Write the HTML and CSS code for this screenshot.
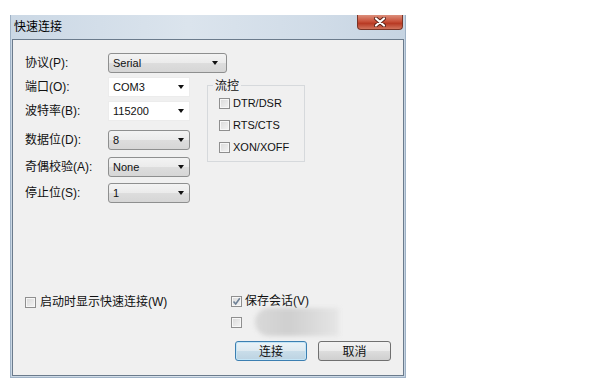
FILE: index.html
```html
<!DOCTYPE html>
<html lang="zh-CN">
<head>
    <meta charset="UTF-8">
    <title>快速连接</title>
    <link rel="stylesheet" href="styles.css">
</head>
<body>

<div class="window">
    <div class="titlebar">
        <span class="title">快速连接</span>
        <span class="close">
            <svg width="12" height="10" viewBox="0 0 12 10">
                <path d="M2 1.5 L10 8.5 M10 1.5 L2 8.5" stroke="#5a2218" stroke-width="4" stroke-linecap="round"/>
                <path d="M2 1.5 L10 8.5 M10 1.5 L2 8.5" stroke="#ffffff" stroke-width="2.2" stroke-linecap="round"/>
            </svg>
        </span>
    </div>

    <div class="client">
        <div class="form">
            <div class="row">
                <span class="lbl">协议(P):</span>
                <div class="combo list wide"><span>Serial</span><i class="arrow"></i></div>
            </div>

            <div class="lower">
                <div class="fields">
                    <div class="row">
                        <span class="lbl">端口(O):</span>
                        <div class="combo edit"><span>COM3</span><i class="arrow"></i></div>
                    </div>
                    <div class="row">
                        <span class="lbl">波特率(B):</span>
                        <div class="combo edit"><span>115200</span><i class="arrow"></i></div>
                    </div>
                    <div class="row gap-9">
                        <span class="lbl">数据位(D):</span>
                        <div class="combo list"><span>8</span><i class="arrow"></i></div>
                    </div>
                    <div class="row gap-7">
                        <span class="lbl">奇偶校验(A):</span>
                        <div class="combo list"><span>None</span><i class="arrow"></i></div>
                    </div>
                    <div class="row gap-6">
                        <span class="lbl">停止位(S):</span>
                        <div class="combo list"><span>1</span><i class="arrow"></i></div>
                    </div>
                </div>

                <fieldset class="flow">
                    <legend>流控</legend>
                    <label class="check"><span class="box"></span>DTR/DSR</label>
                    <label class="check"><span class="box"></span>RTS/CTS</label>
                    <label class="check"><span class="box"></span>XON/XOFF</label>
                </fieldset>
            </div>
        </div>

        <div class="bottom">
            <label class="check startup"><span class="box"></span>启动时显示快速连接(W)</label>
            <div class="side">
                <label class="check">
                    <span class="box">
                        <svg width="9" height="9" viewBox="0 0 9 9">
                            <path d="M1.5 4.5 L3.7 7 L7.8 1.2" stroke="#6f8196" stroke-width="1.6" fill="none"/>
                        </svg>
                    </span>保存会话(V)
                </label>
                <label class="check"><span class="box"></span><span class="smudge"></span></label>
                <div class="buttons">
                    <button class="btn default">连接</button>
                    <button class="btn">取消</button>
                </div>
            </div>
        </div>
    </div>
</div>

</body>
</html>
```

FILE: styles.css
```css
body, html {
    margin: 0;
    padding: 0;
    background: #ffffff;
    font-family: "Liberation Sans", "Noto Sans CJK SC", sans-serif;
    font-size: 12px;
    color: #111;
}

/* Окно */
.window {
    box-sizing: border-box;
    margin: 15px 0 0 10px;
    width: 396px;
    height: 363px;
    border: 1px solid #9fb2c6;
    border-top: none;
    background: linear-gradient(to right, #cbd8e5, #dbe4ed 45%, #cfdbe7 80%, #c6d4e2);
    padding: 0 1px 1px 1px;
    display: flex;
    flex-direction: column;
}

.titlebar {
    height: 24px;
    display: flex;
    justify-content: space-between;
    align-items: flex-start;
}

.title {
    font-family: "Noto Sans CJK SC", sans-serif;
    font-size: 12px;
    line-height: 14px;
    padding: 4px 0 0 2px;
    color: #000;
}

.close {
    box-sizing: border-box;
    width: 46px;
    height: 15px;
    margin-right: 1px;
    border: 1px solid #7a3426;
    border-top: none;
    border-radius: 0 0 4px 4px;
    background: linear-gradient(#dc8f7c, #c9523b 45%, #b83a24 60%, #d1735c);
    display: flex;
    justify-content: center;
    align-items: center;
}

/* Клиентская область */
.client {
    flex: 1;
    border: 1px solid #6b7b8c;
    background: #f0f0f0;
    padding: 13px 12px 14px 12px;
    display: flex;
    flex-direction: column;
    justify-content: space-between;
}

.row {
    display: flex;
    align-items: center;
    height: 20px;
}

.row + .row {
    margin-top: 4px;
}

.row.gap-9 { margin-top: 9px; }
.row.gap-7 { margin-top: 7px; }
.row.gap-6 { margin-top: 6px; }

.lbl {
    width: 83px;
    line-height: 14px;
}

.combo {
    box-sizing: border-box;
    width: 82px;
    height: 20px;
    display: flex;
    align-items: center;
    justify-content: space-between;
    padding: 0 5px 0 4px;
    font-size: 11px;
}

.combo.wide {
    width: 119px;
    padding-right: 8px;
}

.combo.list {
    border: 1px solid #8e8f8f;
    border-radius: 3px;
    background: linear-gradient(#f3f3f3, #ebebeb 50%, #dddddd 51%, #d6d6d6);
}

.combo.edit {
    border: 1px solid #ececec;
    background: #ffffff;
}

.arrow {
    width: 0;
    height: 0;
    border-left: 3.5px solid transparent;
    border-right: 3.5px solid transparent;
    border-top: 4px solid #111;
}

.lower {
    display: flex;
    align-items: flex-start;
    margin-top: 4px;
}

/* Группа "流控" */
.flow {
    margin: 2px 0 0 17px;
    width: 98px;
    box-sizing: border-box;
    border: 1px solid #d6d9dc;
    padding: 5px 4px 7px 11px;
    display: flex;
    flex-direction: column;
    gap: 8px;
}

.flow legend {
    font-family: "Noto Sans CJK SC", sans-serif;
    line-height: 12px;
    padding: 0 2px;
    margin-left: -6px;
}

.check {
    display: flex;
    align-items: center;
    height: 14px;
    line-height: 14px;
    white-space: nowrap;
}

.flow .check {
    font-size: 11px;
}

.box {
    box-sizing: border-box;
    width: 11px;
    height: 11px;
    margin-right: 3px;
    border: 1px solid #8f8f8f;
    background: linear-gradient(135deg, #d9d9d9, #f4f4f4);
    box-shadow: inset 0 0 0 1px #f7f7f7;
    display: flex;
    align-items: center;
    justify-content: center;
    flex-shrink: 0;
}

/* Нижняя часть */
.bottom {
    display: flex;
    align-items: flex-start;
}

.startup {
    width: 207px;
    height: 16px;
    margin-top: 1px;
}

.startup .box {
    margin-right: 4px;
}

.side {
    display: flex;
    flex-direction: column;
}

.side .check {
    height: 16px;
}

.side .check + .check {
    margin-top: 5px;
}

.smudge {
    width: 84px;
    height: 28px;
    margin-left: 10px;
    border-radius: 14px 0 0 14px;
    background: linear-gradient(to right, #d9d9d9, #cfcfcf 40%, #dadada 70%, #e6e6e6);
    filter: blur(2px);
}

.buttons {
    display: flex;
    gap: 11px;
    margin: 11px 0 0 4px;
}

.btn {
    box-sizing: border-box;
    width: 73px;
    height: 20px;
    padding: 0;
    border: 1px solid #707070;
    border-radius: 3px;
    background: linear-gradient(#f2f2f2, #ebebeb 50%, #dddddd 51%, #cfcfcf);
    font-family: "Noto Sans CJK SC", sans-serif;
    font-size: 12px;
    line-height: 14px;
    color: #111;
}

.btn.default {
    width: 72px;
    border-color: #3c7fb1;
    background: linear-gradient(#eaf3f8, #dde9f0 50%, #c9dde9 51%, #bcd3e2);
    box-shadow: inset 0 0 0 1px #c4e5f6;
}
```
